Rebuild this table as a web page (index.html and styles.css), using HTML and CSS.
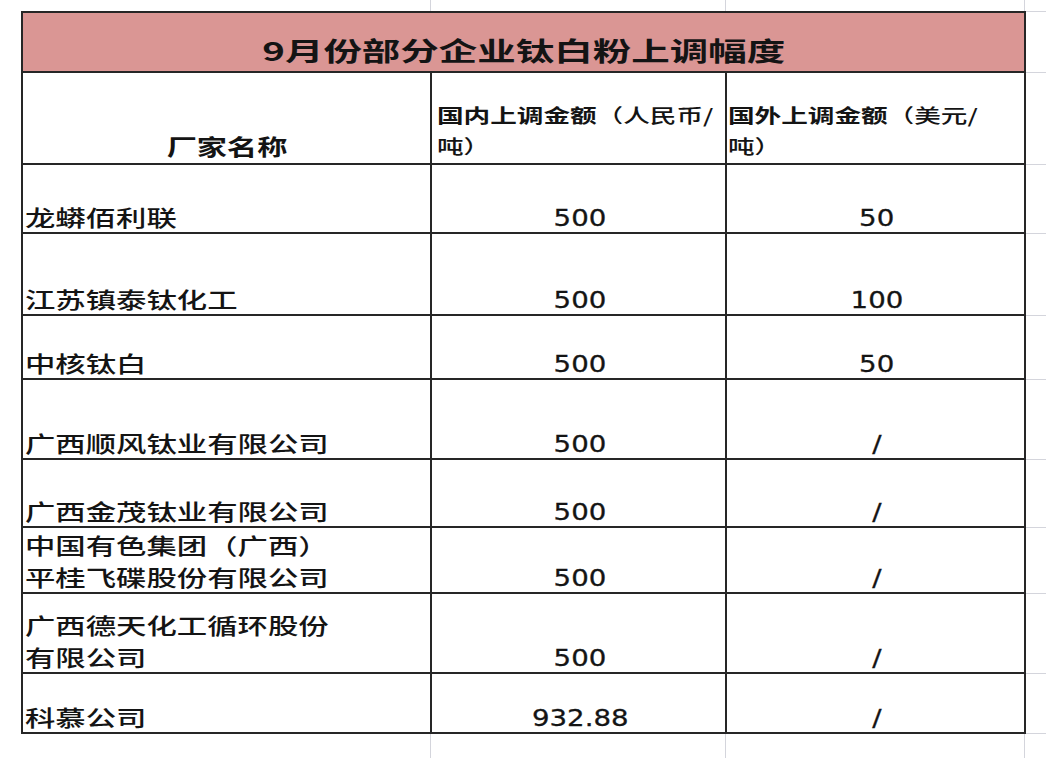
FILE: index.html
```html
<!DOCTYPE html>
<html lang="zh-CN">
<head>
<meta charset="utf-8">
<title>9月份部分企业钛白粉上调幅度</title>
<link rel="stylesheet" href="styles.css">
</head>
<body>
<div class="sheet">
  <div class="row row-title">
    <div class="cell c-all title"><span class="tt">9月份部分企业钛白粉上调幅度</span></div>
    <div class="ext ext-top"></div>
  </div>
  <div class="row h-head">
    <div class="cell c1 center"><span class="tb">厂家名称</span></div>
    <div class="cell c2 head-l2"><span class="th"><b>国内上调金额</b>（人民币/<br>吨）</span></div>
    <div class="cell c3 head-l3"><span class="th"><b>国外上调金额</b>（美元/<br>吨）</span></div>
    <div class="ext"></div>
  </div>
  <div class="row h69">
    <div class="cell c1"><span class="tx">龙蟒佰利联</span></div>
    <div class="cell c2 num"><span class="tn">500</span></div>
    <div class="cell c3 num"><span class="tn">50</span></div>
    <div class="ext"></div>
  </div>
  <div class="row h82">
    <div class="cell c1"><span class="tx">江苏镇泰钛化工</span></div>
    <div class="cell c2 num"><span class="tn">500</span></div>
    <div class="cell c3 num"><span class="tn">100</span></div>
    <div class="ext"></div>
  </div>
  <div class="row h64">
    <div class="cell c1"><span class="tx">中核钛白</span></div>
    <div class="cell c2 num"><span class="tn">500</span></div>
    <div class="cell c3 num"><span class="tn">50</span></div>
    <div class="ext"></div>
  </div>
  <div class="row h80">
    <div class="cell c1"><span class="tx">广西顺风钛业有限公司</span></div>
    <div class="cell c2 num"><span class="tn">500</span></div>
    <div class="cell c3 num"><span class="tn">/</span></div>
    <div class="ext"></div>
  </div>
  <div class="row h68">
    <div class="cell c1"><span class="tx">广西金茂钛业有限公司</span></div>
    <div class="cell c2 num"><span class="tn">500</span></div>
    <div class="cell c3 num"><span class="tn">/</span></div>
    <div class="ext"></div>
  </div>
  <div class="row h66">
    <div class="cell c1"><span class="tx">中国有色集团（广西）<br>平桂飞碟股份有限公司</span></div>
    <div class="cell c2 num"><span class="tn">500</span></div>
    <div class="cell c3 num"><span class="tn">/</span></div>
    <div class="ext"></div>
  </div>
  <div class="row h80">
    <div class="cell c1"><span class="tx">广西德天化工循环股份<br>有限公司</span></div>
    <div class="cell c2 num"><span class="tn">500</span></div>
    <div class="cell c3 num"><span class="tn">/</span></div>
    <div class="ext"></div>
  </div>
  <div class="row h60">
    <div class="cell c1"><span class="tx">科慕公司</span></div>
    <div class="cell c2 num"><span class="tn">932.88</span></div>
    <div class="cell c3 num"><span class="tn">/</span></div>
    <div class="ext"></div>
  </div>
</div>
</body>
</html>
```

FILE: styles.css
```css
html, body {
  margin: 0;
  padding: 0;
}

body {
  width: 1049px;
  min-height: 758px;
  background-color: #ffffff;
  background-image:
    linear-gradient(#d4d5dc, #d4d5dc),
    linear-gradient(#d4d5dc, #d4d5dc),
    linear-gradient(#d4d5dc, #d4d5dc);
  background-size: 1px 100%, 1px 100%, 1px 100%;
  background-position: 430px 0, 725px 0, 1024px 0;
  background-repeat: no-repeat;
  color: #141414;
  font-family: "Noto Sans CJK SC", "Noto Sans", sans-serif;
  overflow: hidden;
}

.sheet {
  margin: 11px 0 0 21px;
  display: flex;
  flex-direction: column;
  width: 1025px;
}

.row {
  display: grid;
  grid-template-columns: 411px 295px 299px 20px;
}

.row-title { height: 62px; }
.h-head { height: 92px; }
.h69 { height: 69px; }
.h82 { height: 82px; }
.h64 { height: 64px; }
.h80 { height: 80px; }
.h68 { height: 68px; }
.h66 { height: 66px; }
.h60 { height: 60px; }

.cell {
  box-sizing: border-box;
  background: #ffffff;
  border-right: 2px solid #262626;
  border-bottom: 2px solid #262626;
  display: flex;
  align-items: flex-end;
  justify-content: flex-start;
  overflow: visible;
}

.c1 {
  border-left: 2px solid #262626;
  padding-left: 2px;
}

.c-all {
  grid-column: 1 / 4;
  border-left: 2px solid #262626;
  border-top: 2px solid #262626;
}

.title {
  background: #da9694;
  justify-content: center;
  padding-bottom: 6px;
}

.center {
  justify-content: center;
}

.num {
  justify-content: center;
  padding-left: 3px;
}

.head-l2 { padding-left: 5px; padding-bottom: 2px; }
.head-l3 { padding-left: 1px; padding-bottom: 2px; }

.ext {
  box-sizing: border-box;
  border-bottom: 1px solid #d4d5dc;
}

.ext-top {
  border-top: 1px solid #d4d5dc;
}

/* text runs: the source sheet was photographed horizontally stretched */
.tt, .tb, .tx, .th, .tn {
  display: inline-block;
  white-space: nowrap;
}

.tt {
  font-size: 26px;
  line-height: 30px;
  font-weight: 700;
  transform: scaleX(1.48);
  transform-origin: center bottom;
}

.tb {
  font-size: 22px;
  line-height: 32px;
  font-weight: 700;
  transform: scaleX(1.37);
  transform-origin: center bottom;
  padding-bottom: 2px;
}

.tx {
  font-size: 22px;
  line-height: 32px;
  font-weight: 500;
  transform: scaleX(1.38);
  transform-origin: left bottom;
}

.th {
  font-size: 19px;
  line-height: 31px;
  font-weight: 500;
  transform: scaleX(1.4);
  transform-origin: left bottom;
}

.th b {
  font-weight: 700;
}

.tn {
  font-family: "DejaVu Sans", "Noto Sans", sans-serif;
  font-size: 23px;
  line-height: 28px;
  transform: scaleX(1.2);
  transform-origin: center bottom;
  -webkit-text-stroke: 0.3px #141414;
}
```
